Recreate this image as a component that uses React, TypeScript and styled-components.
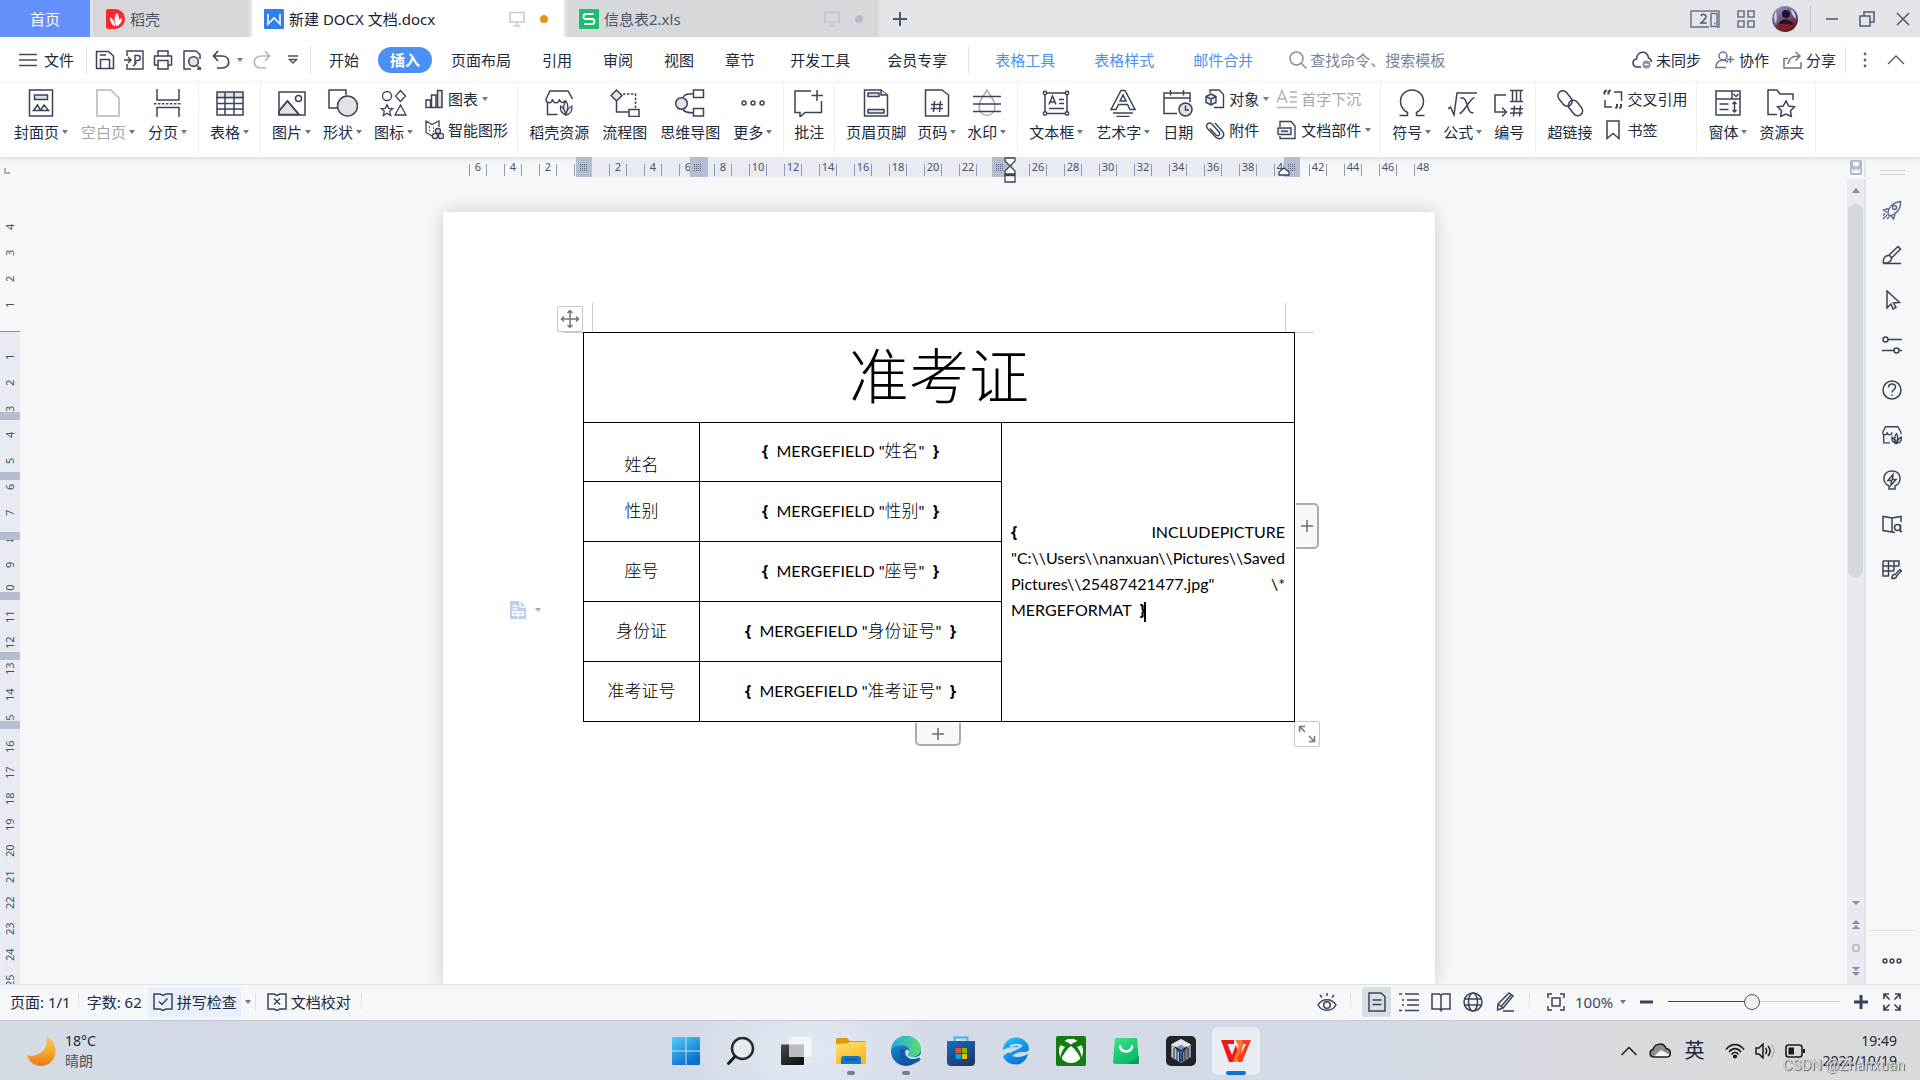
import React from 'react';
import styled, { createGlobalStyle, css } from 'styled-components';

const ink = '#3b4359';
const soft = '#6b7690';
const blue = '#4a90f5';
const shade = '#e1e3e6';
const canvas = '#f5f7f9';

const Global = createGlobalStyle`
  *, *::before, *::after { box-sizing: border-box; }
  html, body, #root { margin: 0; height: 100%; }
  body {
    overflow: hidden;
    font-family: "Noto Sans", "Noto Sans CJK SC", sans-serif;
    font-size: 15px;
    line-height: 20px;
    color: #20283c;
  }
  button, input, select { font: inherit; color: inherit; }
  button { padding: 0; border: 0; background: none; white-space: nowrap; }
  svg { display: block; flex: none; }
`;

/* ---------- icons ---------- */

type IconProps = { w?: number; h?: number; box?: string; color?: string; sw?: number; children: React.ReactNode };
const Icon = ({ w = 28, h = w, box, color = ink, sw = 1.5, children }: IconProps) => (
  <svg width={w} height={h} viewBox={box || `0 0 ${w} ${h}`} fill="none" stroke={color} strokeWidth={sw} aria-hidden="true">
    {children}
  </svg>
);

const Caret = ({ color = soft }: { color?: string }) => (
  <svg width="6" height="4" viewBox="0 0 6 4" aria-hidden="true"><path d="M0 0h6L3 4z" fill={color} /></svg>
);

const Leaves = () => (
  <g fill={shade} strokeWidth="1.2">
    <path d="M21 12c-3 3-3.400 8-.5 14 2.500-5 3.500-10 .5-14z" />
    <path d="M15.500 17c-.5 4 1 7.500 5 9-.3-4-1.500-7-5-9z" />
    <path d="M27 17c-3.500 1.500-5.500 5-6 9 4-.5 6.500-4 6-9z" />
  </g>
);

const big: Record<string, React.ReactNode> = {
  cover: <Icon><rect x="2.500" y="1" width="23" height="26" /><rect x="7.500" y="6" width="13" height="4.500" fill={shade} /><path d="M6.500 21.500l4-5.500 3 5.500zM13.500 21.500l3.500-5.500 4.500 5.500z" /></Icon>,
  blank: <Icon color="#b5b7bc"><path d="M3 1h14l8 8v18H3z" /></Icon>,
  pageBreak: <Icon><path d="M3 0v11h22V0M3 28v-9.500h22V28" /><path d="M0 14.800h28" strokeDasharray="2.500 1.500" /></Icon>,
  table: <Icon><path d="M1 8.500h26v17.500H1z" fill="none" /><path d="M1 3h26v5.500H1z" fill={shade} /><path d="M9 8.500V26M18 3v23M9 3v5M1 14.500h26M1 20h26" /></Icon>,
  image: <Icon><path d="M1 22L9.500 12 21 25.500H1z" fill={shade} /><rect x="1" y="3" width="26" height="23" /><path d="M1 22L9.500 12 21 25.500" /><circle cx="20.500" cy="9.500" r="3" /></Icon>,
  shapes: <Icon w={30} h={28}><path d="M10.500 19H1V1h17v5" /><circle cx="19.500" cy="17" r="10" fill={shade} /></Icon>,
  icons: <Icon sw={1.300}><circle cx="7" cy="7" r="4.500" /><path d="M20.500 1.500l5 5.500-5 5.500-5-5.500z" /><path d="M7 15.500l1.700 3.800 4 .3-3 2.700 1 4.200L7 24.200l-3.700 2.300 1-4.200-3-2.700 4-.3zM20.500 16l5.500 10H15z" /></Icon>,
  store: <Icon><path d="M2.500 13.500V25.500h10M1 10L5 2h18l4.500 8" /><path d="M1 10c0 5 6 5 6.500 0 .5 5 6.500 5 7 0 .5 4 4 4.500 6 1.500" /><Leaves /></Icon>,
  flow: <Icon w={30} h={28}><path d="M6.500 1L12 6.500 6.500 12 1 6.500z" fill={shade} /><path d="M6.500 12v11H19" /><rect x="19" y="20.500" width="10" height="7" /><path d="M13 5h12.500v15" strokeDasharray="2.500 1.500" /></Icon>,
  mind: <Icon w={30} h={28}><circle cx="6.500" cy="14.500" r="5.800" fill={shade} /><path d="M8 8.500C10 5 13 4.800 18.500 4.800M8 20.500c2 3 5 3.300 10.500 3.300" /><rect x="18.500" y="1" width="10" height="7.500" /><rect x="18.500" y="19.500" width="10" height="7.500" /></Icon>,
  more: <Icon><circle cx="5" cy="14" r="2" /><circle cx="14" cy="14" r="2" /><circle cx="23" cy="14" r="2" /></Icon>,
  comment: <Icon w={30} h={28}><path d="M17 2H1v21.500h5V28l5-4.500h16.500V12M23 1v11M17.500 6.500h11.500" /></Icon>,
  header: <Icon><path d="M2.500 1H19l6.500 5v21h-23z" /><path d="M19 1v5h6" fill={shade} /><rect x="6" y="4" width="11" height="3.500" fill={shade} /><rect x="6" y="20.500" width="16" height="3.500" fill={shade} /></Icon>,
  pageNo: <Icon><path d="M2.500 1H19l6.500 5v21h-23z" /><path d="M11.500 12l-1 11M17.500 12l-1 11M8 15.500h12M8 19.500h12" /></Icon>,
  watermark: <Icon><path d="M14 1c3 6 8 10 8 16.500 0 5-3.500 9-8 9s-8-4-8-9C6 11 11 7 14 1z" stroke="#a6a9b2" /><path d="M0 7.500h28M0 15h28M0 22.500h28" /></Icon>,
  textBox: <Icon><rect x="3" y="4" width="22" height="20.500" /><g fill="#fff"><circle cx="3" cy="4" r="1.700" /><circle cx="25" cy="4" r="1.700" /><circle cx="3" cy="24.500" r="1.700" /><circle cx="25" cy="24.500" r="1.700" /></g><path d="M7 15.500L10.500 7l3.500 8.500M8 13h5M17 10.500h5M17 14.500h5M7 19.500h15" /></Icon>,
  wordArt: <Icon><path d="M2 20.500L12 1.500h4l10 19h-5l-2.500-5h-9l-2.500 5zM11 12h6l-3-6z" fill="none" /><path d="M4 24h20M7.500 27.500h13" /></Icon>,
  date: <Icon w={30} h={28}><path d="M14 24.500H1V4h26v9M1 9h26M7.500 1v5.500M20.500 1v5.500" /><circle cx="22.500" cy="20.500" r="6.500" fill={shade} /><path d="M22.500 16.500v4.500h3.500" /></Icon>,
  omega: <Icon><path d="M1.500 26.500h8v-3C5 21 2.500 17 2.500 12.500 2.500 6 7.500 1 14 1s11.500 5 11.500 11.500c0 4.500-2.500 8.500-7 11v3h8" /></Icon>,
  formula: <Icon w={30} h={28}><path d="M0 20l2.500-2 3.500 8L9 4h20" /><path d="M12.500 9.500c3-2 5 .5 6.500 6 1.500 5.500 3 9.500 6.500 8M26.500 8.500C22 9 16 24 11.500 24.500" /></Icon>,
  numbering: <Icon w={30} h={28}><path d="M12 6H1v17h10M8 18.500l4.500 4.500L8 27.500M16 1.500h13M16 12.500h13M18.500 1.500v11M22.500 1.500v11M26.500 1.500v11M20.500 16.500l-1 11M26.500 16.500l-1 11M16.500 19.800h12.500M16 24h12.500" /></Icon>,
  link: <Icon><rect x="-5" y="-8.500" width="10" height="17" rx="5" transform="translate(9 9.500) rotate(-38)" /><rect x="-5" y="-8.500" width="10" height="17" rx="5" transform="translate(19.500 19) rotate(-38)" /></Icon>,
  form: <Icon><rect x="2" y="2" width="24" height="24" /><path d="M2 10h24M18 2v8" /><path d="M19.500 5l2.500 2.500L24.500 5M5.500 15h9M5.500 20.500h9M20.500 13.500v9M18.500 15l2-2 2 2M18.500 21l2 2 2-2" /></Icon>,
  library: <Icon w={30} h={28}><path d="M10 25.500H1V1h9l3 4h13v6" /><path d="M19 12l2.800 5 5.700.8-4 4 .9 5.700L19 25l-5.400 2.500.9-5.700-4-4 5.700-.8z" /></Icon>,
};

const small: Record<string, React.ReactNode> = {
  chart: <Icon w={20}><path d="M2 11h4.500v7.500H2z" /><path d="M7.500 6H12v12.500H7.500z" /><path d="M13.500 1.500H18v17h-4.500z" fill={shade} /></Icon>,
  smart: <Icon w={20} sw={1.300}><path d="M8 16l-6-3.500V1l6 3.500L15 1v6M5 7h1M9 8h1M5 10.500h1M9 11h1M12 9h1" /><circle cx="14" cy="11" r="2.500" fill={shade} /><circle cx="11" cy="16" r="2.700" fill={shade} /><circle cx="17" cy="16" r="2.700" fill={shade} /></Icon>,
  object: <Icon w={20} sw={1.400}><path d="M5 4V1h9l4.500 4.500v13H9" /><path d="M6 5l5 2.500v6L6 16l-5-2.500v-6zM1 7.500L6 10l5-2.500M6 10v6" fill={shade} /></Icon>,
  clip: <Icon w={20} sw={1.400}><path d="M5 8.500l6 6.500c2 2 5-.5 3-3L7.500 4.500C4 1 -.5 5 2.500 8.500l8 8.500c5 4.500 10.500-1 7-5.500L10 3" /></Icon>,
  dropCap: <Icon w={20} color="#b1b3b8"><path d="M0 14L5 1.500 10 14M1.500 10h7M13 3h7M13 8h7M13 13h7M0 18.500h20" /></Icon>,
  parts: <Icon w={20} sw={1.400}><path d="M3 7V1.500h11l4 4.500v12.500H3V16" /><rect x="1" y="8" width="13" height="6.500" fill={shade} /><path d="M4 11.200h7" /></Icon>,
  cross: <Icon w={20} sw={1.500}><path d="M11 3h7.500v9M9 18H2v-7" /><path d="M1.500 5.500V3L3.500 1M5.500 5.500V3l2-2M14 15v2.500l-1.500 2M18 15v2.500l-1.500 2" strokeWidth="2" /></Icon>,
  bookmark: <Icon w={20}><path d="M4 1h12v17.500l-6-5-6 5z" /></Icon>,
};

const quick: [string, React.ReactNode][] = [
  ['保存', <Icon w={20}><path d="M1.500 1.500h12l5 4.500v12.500h-17zM5.500 18V9.500h9V18M5 5h6" /></Icon>],
  ['输出为PDF', <Icon w={20} sw={1.400}><path d="M3 6V1h16v18H3v-5M0 10h6.500M4 7l3 3-3 3M11 15V5.500h3c3 0 3 5 0 5h-3M9 16c2-1 3-2.500 3-4" /></Icon>],
  ['打印', <Icon w={20}><path d="M5 6V1h10v5M5 15H1.500V6h17v9H15M5 10.500h10V19H5z" /></Icon>],
  ['打印预览', <Icon w={20}><path d="M9 19H2V1h12l4 3.500V9M18 17v2h-3" /><circle cx="11.500" cy="11.500" r="4.800" fill={shade} /><path d="M15 15.500l4 4" /></Icon>],
];

const rail: [string, React.ReactNode][] = [
  ['启动', <Icon w={20} color="#5b6a8d"><path d="M6 14c0-5 3-11 12.500-12.500C19 10 13 15 7.500 16zM6.500 8.500L1.500 10l3.500 2.500M13 14.500l-1.500 4.500-2.500-3M5 15l-4 4M3 13.500l-2 2M7 17l-2 2" /><circle cx="12.500" cy="7.500" r="2" /></Icon>],
  ['样式', <Icon w={20}><path d="M7 10l9-8.500 2.500 2.500-9 9M1.500 18c-1-4.500 2-8 5.500-7.500 3 .5 3 4 1 6-1.500 1.500-3.500 1.700-6.500 1.500zM1 18.500h18" /></Icon>],
  ['选择', <Icon w={20}><path d="M5 1v17l4-4 2 5 3-1.500-2.500-4.500 6-.5z" /></Icon>],
  ['属性', <Icon w={20}><circle cx="3.500" cy="4.500" r="2.500" /><path d="M6 4.500h14M0 15.500h12" /><circle cx="14.500" cy="15.500" r="2.500" /><path d="M17 15.500h3" /></Icon>],
  ['帮助', <Icon w={20}><circle cx="10" cy="10" r="9" /><path d="M6.500 7.500c0-5 7-4.500 7-.5 0 2.500-3.500 3-3.500 5.500M10 14.500v1.500" /></Icon>],
  ['稻壳资源', <Icon w={20} box="0 0 29 28" sw={2}><path d="M2.500 13.500V25.500h9M1 10L5 2h18l4.500 8" /><path d="M1 10c0 5 6 5 6.500 0 .5 5 6.500 5 7 0M27.500 10v3" /><g fill={shade}><path d="M21 12c-3 3-3.400 8-.5 14 2.500-5 3.500-10 .5-14zM14.500 17c-.5 4 1 7.500 5 9-.3-4-1.500-7-5-9zM28 17c-3.500 1.500-5.500 5-6 9 4-.5 6.500-4 6-9z" /></g></Icon>],
  ['推荐', <Icon w={20}><path d="M7 19v-3c-8-4-6-15 3-15s11 11 3 15v3zM11 4.500l-5 6h3.500L9 15l5-5.500h-3.500z" /></Icon>],
  ['查找', <Icon w={20}><path d="M10 3v14L1 15.500V1.500zM10 3l9-1.500V7M10 17l3 .5" /><circle cx="15.500" cy="12.500" r="3" /><path d="M18.500 9.500v7h1.500" /></Icon>],
  ['表格', <Icon w={20}><path d="M1 1h16v5M1 1v15h6M1 6h16M1 11h11M6.500 1v15M12 1v10M10 18.500c0-3 1-4.500 3-4l5-5 1.500 1.500-5 5c.5 2-2 2.500-4.500 2.500z" /></Icon>],
];

/* ---------- title bar ---------- */

const Shell = styled.div`
  display: flex;
  flex-direction: column;
  height: 100vh;
  background: ${canvas};
`;
const TitleBar = styled.header`
  display: flex;
  height: 37px;
  flex: none;
  background: #e2e4e8;
`;
const HomeTab = styled.button`
  width: 90px;
  color: #fff;
  background: #6490fb;
`;
const DocTab = styled.button<{ $w: number; $active?: boolean }>`
  display: flex;
  align-items: center;
  gap: 5px;
  width: ${p => p.$w}px;
  margin-left: 3px;
  padding: 0 16px 0 12px;
  color: ${p => (p.$active ? '#1b2030' : '#4d5468')};
  background: ${p => (p.$active ? '#fff' : '#d6d8dc')};
`;
const TabMeta = styled.span`
  display: flex;
  align-items: center;
  gap: 15px;
  margin-left: auto;
`;
const Dot = styled.i<{ $c: string }>`
  width: 8px;
  height: 8px;
  border-radius: 50%;
  background: ${p => p.$c};
`;
const AddTab = styled.button`
  display: grid;
  place-items: center;
  width: 42px;
`;
const WindowTools = styled.div`
  display: flex;
  align-items: center;
  gap: 16px;
  margin-left: auto;
  padding-right: 7px;
`;
const TitleRule = styled.i`
  width: 1px;
  height: 26px;
  margin: 0 -4px;
  background: #c5c8cf;
`;
const IconBtn = styled.button<{ $w?: number }>`
  display: grid;
  place-items: center;
  width: ${p => p.$w ?? 20}px;
`;
const Screen = ({ c }: { c: string }) => (
  <Icon w={16} h={16} color={c}><path d="M1 1.500h14v9.500H1zM8 11v4M4.500 15h7" /></Icon>
);

/* ---------- menu row ---------- */

const MenuRow = styled.nav`
  display: flex;
  align-items: center;
  height: 46px;
  flex: none;
  padding: 0 14px 0 19px;
  background: #fff;
`;
const FileBtn = styled.button`
  display: flex;
  align-items: center;
  gap: 7px;
`;
const Rule = styled.i<{ $l?: number; $r?: number; $h?: number }>`
  flex: none;
  width: 1px;
  height: ${p => p.$h ?? 28}px;
  margin: 0 ${p => p.$r ?? 0}px 0 ${p => p.$l ?? 0}px;
  background: #e0e2e6;
`;
const QuickBar = styled.div`
  display: flex;
  align-items: center;
  gap: 9px;
`;
const Split = styled.div`
  display: flex;
  align-items: center;
  gap: 6px;
`;
const Tabs = styled.div`
  display: flex;
  align-items: center;
  gap: 7px;
`;
const Tab = styled.button<{ $pad?: number; $on?: boolean; $ctx?: boolean }>`
  height: 26px;
  padding: 0 ${p => p.$pad ?? 12}px;
  border-radius: 13px;
  ${p => p.$ctx && css`color: ${blue};`}
  ${p => p.$on && css`color: #fff; background: ${blue}; font-weight: 600;`}
`;
const Search = styled.label`
  display: flex;
  align-items: center;
  gap: 3px;
  margin-left: 20px;
`;
const SearchInput = styled.input`
  width: 180px;
  padding: 0;
  border: 0;
  outline: 0;
  background: none;
  &::placeholder { color: #78829b; opacity: 1; }
`;
const Account = styled.div`
  display: flex;
  align-items: center;
  gap: 14px;
  margin-left: auto;
`;
const AccountBtn = styled.button`
  display: flex;
  align-items: center;
  gap: 4px;
`;

/* ---------- ribbon ---------- */

const Ribbon = styled.section`
  display: flex;
  height: 74px;
  flex: none;
  padding: 0 3px;
  background: #fff;
  box-shadow: 0 1px 5px rgba(40, 50, 70, 0.18);
`;
const Group = styled.div<{ $gap?: number; $pad?: number }>`
  display: flex;
  height: 72px;
  gap: ${p => p.$gap ?? 12}px;
  padding: 6px ${p => p.$pad ?? 11}px 0;
  border-right: 1px solid #eceef1;
`;
const Tool = styled.button<{ $off?: boolean }>`
  display: flex;
  flex-direction: column;
  align-items: center;
  gap: 5px;
  height: 54px;
  color: ${p => (p.$off ? '#a4a6ab' : 'inherit')};
`;
const ToolLabel = styled.span`
  display: flex;
  align-items: center;
  gap: 3px;
`;
const Columns = styled.div`
  display: flex;
  gap: 8px;
  margin: 0 -2px 0 -1px;
`;
const Column = styled.div`
  display: flex;
  flex-direction: column;
  gap: 11px;
`;
const SmallTool = styled.button<{ $off?: boolean }>`
  display: flex;
  align-items: center;
  gap: 4px;
  color: ${p => (p.$off ? '#a4a6ab' : 'inherit')};
`;

type Item = [label: string, icon: string, drop?: boolean, off?: boolean];
const BigTool = ({ it: [label, icon, drop, off] }: { it: Item }) => (
  <Tool $off={off}>
    {big[icon]}
    <ToolLabel>{label}{drop && <Caret />}</ToolLabel>
  </Tool>
);
const ToolColumn = ({ items }: { items: Item[] }) => (
  <Column>
    {items.map(([label, icon, drop, off]) => (
      <SmallTool key={label} $off={off}>{small[icon]}{label}{drop && <Caret />}</SmallTool>
    ))}
  </Column>
);
type GroupDef = { gap?: number; pad?: number; items: Item[]; cols?: Item[][] };
const groups: GroupDef[] = [
  { gap: 13, items: [['封面页', 'cover', true], ['空白页', 'blank', true, true], ['分页', 'pageBreak', true]] },
  { items: [['表格', 'table', true]] },
  { items: [['图片', 'image', true], ['形状', 'shapes', true], ['图标', 'icons', true]], cols: [[['图表', 'chart', true], ['智能图形', 'smart']]] },
  { gap: 13, items: [['稻壳资源', 'store'], ['流程图', 'flow'], ['思维导图', 'mind'], ['更多', 'more', true]] },
  { pad: 10, items: [['批注', 'comment']] },
  { gap: 11, items: [['页眉页脚', 'header'], ['页码', 'pageNo', true], ['水印', 'watermark', true]] },
  { gap: 13, items: [['文本框', 'textBox', true], ['艺术字', 'wordArt', true], ['日期', 'date']], cols: [[['对象', 'object', true], ['附件', 'clip']], [['首字下沉', 'dropCap', false, true], ['文档部件', 'parts', true]]] },
  { items: [['符号', 'omega', true], ['公式', 'formula', true], ['编号', 'numbering']] },
  { items: [['超链接', 'link']], cols: [[['交叉引用', 'cross'], ['书签', 'bookmark']]] },
  { items: [['窗体', 'form', true], ['资源夹', 'library']] },
];

/* ---------- workspace ---------- */

const Work = styled.main`
  display: grid;
  grid-template-columns: 20px minmax(0, 1fr) 19px 54px;
  grid-template-rows: 20px minmax(0, 1fr);
  flex: 1;
  min-height: 0;
`;
const Corner = styled.div`
  padding: 11px 0 0 4px;
`;
const CornerMark = styled.i`
  display: block;
  width: 6px;
  height: 6px;
  border: solid #a8afc2;
  border-width: 0 0 2px 2px;
`;
const Centered = styled.div<{ $clip?: boolean }>`
  display: flex;
  justify-content: center;
  padding-left: 11px;
  overflow: ${p => (p.$clip ? 'hidden' : 'visible')};
`;
const Ruler = styled.div`
  position: relative;
  z-index: 1;
  flex: none;
  width: 992px;
  padding: 0 0 0 26px;
  background: linear-gradient(90deg, transparent 140px, #e8ebf1 140px 850px, transparent 850px);
`;
const RulerCells = styled.div`
  display: flex;
  gap: 17px;
`;
const RulerCell = styled.span<{ $last?: boolean }>`
  display: block;
  flex: none;
  width: 18px;
  height: 20px;
  text-align: center;
  font-size: 11px;
  line-height: 19px;
  color: #49526b;
  background:
    linear-gradient(#8f99b2, #8f99b2) 0 7px / 1px 12px no-repeat,
    linear-gradient(#8f99b2, #8f99b2) 100% 7px / ${p => (p.$last ? 0 : 1)}px 12px no-repeat;
`;
const RulerBand = styled.i<{ $x: number; $w: number }>`
  position: absolute;
  top: 0;
  left: ${p => p.$x}px;
  width: ${p => p.$w}px;
  height: 20px;
  background: #b5bdd1;
  &::after {
    content: "";
    position: absolute;
    left: 4px;
    top: 6px;
    width: 8px;
    height: 8px;
    background:
      repeating-linear-gradient(#b5bdd1 0 1px, transparent 1px 2px),
      repeating-linear-gradient(90deg, #59627d 0 1px, transparent 1px 2px);
  }
`;
const Indent = styled.span<{ $x: number; $y: number }>`
  position: absolute;
  left: ${p => p.$x}px;
  top: ${p => p.$y}px;
`;
const VRuler = styled.div`
  position: relative;
  display: flex;
  flex-direction: column;
  overflow: hidden;
  padding-top: 37px;
  background: linear-gradient(transparent 154px, #8a93ac 154px 155px, #e8ebf1 155px);
`;
const VCell = styled.span`
  flex: none;
  height: 26px;
  width: 20px;
  text-align: center;
  writing-mode: vertical-rl;
  transform: rotate(180deg);
  font-size: 11px;
  line-height: 20px;
  color: #49526b;
`;
const VBand = styled.i<{ $y: number }>`
  position: absolute;
  left: 0;
  top: ${p => p.$y}px;
  width: 20px;
  height: 8px;
  background: #b5bdd1;
`;
const Page = styled.article`
  position: relative;
  flex: none;
  width: 992px;
  margin-top: 35px;
  padding: 120px 140px 0;
  background: #fff;
  box-shadow: 0 0 16px rgba(60, 65, 75, 0.22);
`;
const TableWrap = styled.div`
  position: relative;
  width: 712px;
`;
const Sheet = styled.table`
  width: 100%;
  border-collapse: collapse;
  table-layout: fixed;
  font-family: Lato, "Noto Sans CJK SC", sans-serif;
  font-size: 16px;
  color: #000;
  th, td { padding: 0 0 2px; border: 1px solid #000; text-align: center; font-weight: 400; }
`;
const Song = styled.span`
  font-size: 17px;
  font-weight: 300;
`;
const Brace = styled.b`
  font-family: "Noto Sans", sans-serif;
  font-weight: 700;
`;
const Title = styled.th`
  && { padding-bottom: 4px; font-size: 60px; font-weight: 300; line-height: 72px; }
`;
const Row = styled.tr<{ $h: number }>`
  height: ${p => p.$h}px;
`;
const FieldCell = styled.td`
  white-space: pre;
`;
const LabelCell = styled.th<{ $low?: boolean }>`
  && { vertical-align: ${p => (p.$low ? 'bottom' : 'middle')}; padding-bottom: ${p => (p.$low ? 6 : 2)}px; }
`;
const PictureCell = styled.td`
  && { padding: 0 9px 2px; }
`;
const CodeLine = styled.div<{ $end?: boolean }>`
  line-height: 26px;
  white-space: pre-wrap;
  text-align: justify;
  text-align-last: ${p => (p.$end ? 'left' : 'justify')};
`;
const TextCursor = styled.i`
  display: inline-block;
  width: 2px;
  height: 20px;
  margin-left: -2px;
  vertical-align: middle;
  background: #000;
`;
const Handle = styled.button<{ $x: string; $y: string; $w: number; $h: number; $side?: 'right' | 'bottom' }>`
  position: absolute;
  left: ${p => p.$x};
  top: ${p => p.$y};
  display: grid;
  place-items: center;
  width: ${p => p.$w}px;
  height: ${p => p.$h}px;
  border: 1px solid #c4c6ca;
  border-radius: 2px;
  background: #fff;
  ${p => p.$side && css`border: 2px solid #a9abaf; background: #f8f8f8;`}
  ${p => p.$side === 'right' && css`border-left: 0; border-radius: 0 5px 5px 0;`}
  ${p => p.$side === 'bottom' && css`border-top: 0; border-radius: 0 0 5px 5px;`}
`;
const Mark = styled.i<{ $x: number; $y: number; $w: number; $h: number }>`
  position: absolute;
  left: ${p => p.$x}px;
  top: ${p => p.$y}px;
  width: ${p => p.$w}px;
  height: ${p => p.$h}px;
  background: #c9cbcf;
`;
const PasteTag = styled.button`
  position: absolute;
  left: -73px;
  top: 269px;
  display: flex;
  align-items: center;
  gap: 9px;
`;
const ScrollTop = styled.div`
  display: grid;
  place-items: center;
  border-right: 2px solid #e2e4ec;
`;
const Scroll = styled.div`
  display: flex;
  flex-direction: column;
  align-items: center;
  gap: 15px;
  margin-top: 2px;
  padding: 9px 0 8px;
  background: #e8eaf0;
  border-right: 2px solid #e2e4ec;
`;
const Track = styled.div`
  flex: 1;
  margin-top: -4px;
`;
const Thumb = styled.div`
  width: 15px;
  height: 70%;
  max-height: 374px;
  border-radius: 8px;
  background: #d3d7e0;
`;
const Rail = styled.aside`
  grid-row: 1 / 3;
  grid-column: 4;
  display: flex;
  flex-direction: column;
  align-items: center;
  gap: 25px;
  padding: 13px 2px 12px 0;
`;
const Grip = styled.i`
  width: 25px;
  height: 5px;
  border: solid #d0d3d9;
  border-width: 1px 0;
`;
const RailEnd = styled.div`
  display: grid;
  place-items: center;
  width: 49px;
  height: 42px;
  margin-top: auto;
  padding-top: 18px;
  border-top: 1px solid #dfe2e8;
`;

/* ---------- status bar ---------- */

const Status = styled.footer`
  display: flex;
  align-items: center;
  height: 36px;
  flex: none;
  padding-bottom: 2px;
  border-top: 1px solid #dfe2e8;
  background: ${canvas};
`;
const Info = styled.span`
  padding: 0 7px 0 10px;
`;
const Count = styled(Info)`
  padding: 0 6px 0 8px;
`;
const Chip = styled.button<{ $on?: boolean }>`
  display: flex;
  align-items: center;
  gap: 4px;
  height: 30px;
  padding: 0 4px 0 5px;
  background: ${p => (p.$on ? '#e7f0fc' : 'none')};
`;
const ViewBar = styled.div`
  display: flex;
  align-items: center;
  margin-left: auto;
  padding-right: 18px;
`;
const View = styled.button<{ $on?: boolean }>`
  display: grid;
  place-items: center;
  width: 29px;
  height: 30px;
  margin-right: 3px;
  border-radius: 2px;
  background: ${p => (p.$on ? '#d8dde6' : 'none')};
`;
const Zoom = styled.select`
  width: 45px;
  padding: 0;
  border: 0;
  appearance: none;
  background: none;
  color: #3d4861;
`;
const Slider = styled.input`
  width: 172px;
  height: 18px;
  margin: 0 14px 0 15px;
  appearance: none;
  background: linear-gradient(90deg, #3b4560 50%, #d0d3da 50%) center / 100% 1px no-repeat;
  &::-webkit-slider-thumb {
    appearance: none;
    width: 16px;
    height: 16px;
    border: 1px solid #555;
    border-radius: 50%;
    background: #efefef;
  }
`;

/* ---------- taskbar ---------- */

const Taskbar = styled.footer`
  display: grid;
  grid-template-columns: 1fr auto 1fr;
  align-items: center;
  height: 60px;
  flex: none;
  padding-left: 1px;
  background:
    radial-gradient(ellipse 130px 90px at 810px 50%, #e2e9f3, transparent),
    linear-gradient(90deg, #d3dbe5, #d3dae6 70%, #d8dadf 82%, #d9dadd);
  border-top: 1px solid #c3c9d8;
`;
const Weather = styled.div`
  display: flex;
  align-items: center;
  gap: 9px;
  padding-left: 25px;
  font-size: 14px;
`;
const WeatherSky = styled.div`
  color: #4f535b;
`;
const Apps = styled.div`
  display: flex;
  gap: 7px;
`;
const AppBtn = styled.button<{ $on?: boolean; $open?: boolean }>`
  position: relative;
  display: grid;
  place-items: center;
  width: 48px;
  height: 48px;
  border-radius: 5px;
  ${p => p.$on && css`background: #e9ecf3; box-shadow: 0 0 1px 1px #d2d6df;`}
  ${p => (p.$on || p.$open) && css`
    &::after {
      content: "";
      position: absolute;
      bottom: 0;
      width: ${p.$on ? 20 : 8}px;
      height: 4px;
      border-radius: 2px;
      background: ${p.$on ? '#0b76d6' : '#797c84'};
    }
  `}
`;
const Tray = styled.div`
  display: flex;
  align-items: center;
  justify-content: flex-end;
  padding-right: 23px;
`;
const Lang = styled.span`
  margin: 0 20px 0 14px;
  font-size: 20px;
  line-height: 24px;
`;
const Clock = styled.div`
  margin-left: 18px;
  text-align: right;
  font-size: 14px;
`;
const Watermark = styled.div`
  position: fixed;
  right: 15px;
  bottom: 5px;
  font-family: Roboto, sans-serif;
  font-size: 15px;
  color: rgba(255, 255, 255, 0.75);
  text-shadow: 1px 1px 1px #666, 0 0 1px #777;
`;

const Grad = ({ id, a, b }: { id: string; a: string; b: string }) => (
  <linearGradient id={id} x1="0" y1="0" x2=".6" y2="1"><stop stopColor={a} /><stop offset="1" stopColor={b} /></linearGradient>
);
const Logo = ({ children }: { children: React.ReactNode }) => (
  <svg width="30" height="30" viewBox="0 0 30 30" aria-hidden="true">{children}</svg>
);

const apps: { name: string; open?: boolean; on?: boolean; art: React.ReactNode }[] = [
  { name: '开始', art: <Logo><Grad id="win" a="#52cdfb" b="#0670cd" /><path fill="url(#win)" d="M2 1h12.500v13.500H1V2a1 1 0 0 1 1-1zM15.500 1H28a1 1 0 0 1 1 1v12.500H15.500zM1 15.500h13.500V29H2a1 1 0 0 1-1-1zM15.500 15.500H29V28a1 1 0 0 1-1 1H15.500z" /></Logo> },
  { name: '搜索', art: <Logo><circle cx="16.500" cy="12.500" r="10.500" fill="#e6ebf2" stroke="#2b2b2b" strokeWidth="2.500" /><path d="M9 20.500L2.500 27.500" stroke="#1d1d1d" strokeWidth="3" strokeLinecap="round" /></Logo> },
  { name: '任务视图', art: <Logo><Grad id="tv" a="#4a4a4a" b="#161616" /><rect x="0" y="8.500" width="23" height="20.500" rx="1" fill="url(#tv)" /><rect x="8" y="1" width="22" height="20" rx="1" fill="#f4f5f6" /><path d="M8 8.500h15V21H8z" fill="#bcbdbf" /></Logo> },
  { name: '文件资源管理器', open: true, art: <Logo><Grad id="fd" a="#ffe07a" b="#fcb614" /><path d="M0 4a2 2 0 0 1 2-2h9l3 3h14a2 2 0 0 1 2 2v6H0z" fill="#dc9a0c" /><path d="M0 8l11-.5L14 6h16v21a1 1 0 0 1-1 1H1a1 1 0 0 1-1-1z" fill="url(#fd)" /><path d="M5 28v-5a3 3 0 0 1 3-3h14a3 3 0 0 1 3 3v5z" fill="#1577cc" /><path d="M9 23.500h12" stroke="#0b4f94" strokeWidth="1.500" /></Logo> },
  { name: 'Edge', open: true, art: <Logo><Grad id="e1" a="#1c9be0" b="#0a4c9c" /><linearGradient id="e2"><stop stopColor="#24a9e8" /><stop offset="1" stopColor="#5fdc6b" /></linearGradient><circle cx="15" cy="15" r="15" fill="url(#e1)" /><path d="M1 10C4 3 9 0 15 0c9 0 15 6.500 15 13 0 5-4 8-9 8-3 0-5-1-4-3 3-4 0-8-5-8.500C7 9 3 10 1 13z" fill="url(#e2)" /><path d="M12 13c-3 6 0 13 8 13 4 0 7-1.500 8.500-3.500" fill="none" stroke="#1557a4" strokeWidth="3" /><path d="M15 14c-2 4 1 9 7 9 3 0 5-.7 7-2l1 1v-4c-2 2.500-5 3.500-9 3-4-.3-5-2-3.500-4 1-1.500.5-3-1.500-3z" fill="#dce6f2" /></Logo> },
  { name: 'Microsoft Store', art: <Logo><Grad id="ms" a="#136fc0" b="#203a68" /><path d="M8.500 6V1.500h13V6" fill="none" stroke="#35b7f2" strokeWidth="2" /><path d="M1 5h28v21a4 4 0 0 1-4 4H5a4 4 0 0 1-4-4z" fill="url(#ms)" /><path d="M9.500 12H15v5H9.500z" fill="#f25022" /><path d="M16 12h5v5h-5z" fill="#7fba00" /><path d="M9.500 18H15v5H9.500z" fill="#00a4ef" /><path d="M16 18h5v5h-5z" fill="#ffb900" /></Logo> },
  { name: '浏览器', art: <Logo><Grad id="br" a="#27c3ff" b="#0873d8" /><path d="M2 14C2 7 8 1.500 15 1.500S28 7 28 13c0 2-2 3-4 3-6 0-10 1-13 4 5 2 11 1 16-2-1.500 6-6 10.500-12 10.500C9 28.500 3.500 25 2 20c5-4 11-6 16-8.500-6-1.500-11 0-16 2.500z" fill="url(#br)" /><path d="M9 10.500c4-2 8-2 11-.5-3 2.500-8 4-12 6.500" fill="none" stroke="#d4dbe6" strokeWidth="2" /></Logo> },
  { name: 'Xbox', art: <Logo><rect width="30" height="30" rx="2" fill="#117c10" /><circle cx="15" cy="15" r="12" fill="#fff" /><path d="M7 5c3 0 6 2 8 3.500C17 7 20 5 23 5l3 4-5 2c4 5 5 9 4 13-2-6-6-11-10-14C11 13 7 18 5 24c-1-4 0-8 4-13L4 9z" fill="#117c10" /><path d="M10 4c2-1.500 8-1.500 10 0l-5 2.500z" fill="#fff" /></Logo> },
  { name: '应用商店', art: <Logo><Grad id="gs" a="#3be58b" b="#08b866" /><path d="M4 2h22l2 24a2 2 0 0 1-2 2H4a2 2 0 0 1-2-2z" fill="url(#gs)" /><path d="M16 28c5-2 9-4 11.500-8l.5 8z" fill="#079a5b" /><path d="M9 10.500c1 6.500 11 6.500 12 0" fill="none" stroke="#fff" strokeWidth="2.500" strokeLinecap="round" /></Logo> },
  { name: '3D', art: <Logo><rect width="30" height="30" rx="5" fill="#22242a" /><path d="M15 3l10 5.500v12.500L15 27 5 21V8.500z" fill="#8a919e" /><path d="M15 3l10 5.500-5 3-5-3-5 3-5-3z" fill="#dfe3ea" /><path d="M6 10l7 5v10l-7-4z" fill="#c3cad6" /><path d="M8 12v10M11 14v10M19 14v10M22 12v10" stroke="#373c47" strokeWidth="1.200" /><path d="M9 11l6 3.500L21 11l-4.500 5.500V25h-3v-8.500z" fill="#2369d8" stroke="#121418" /></Logo> },
  { name: 'WPS', on: true, art: <Logo><path d="M0 4h13v4H6.500L11 19l4-10 2 6-5 11H8z" fill="#f5161c" /><path d="M13 26l8-22h9l-9 22h-4l-1.500-4z" fill="#fb3a1a" /><path d="M19.500 19L25 8h-3z" fill="#e9ecf3" /><path d="M12 26l5.500-16L14.500 4H21l1 3-6.500 19z" fill="#ff7426" /></Logo> },
];

const rulerLabels = ['6', '4', '2', '', ...Array.from({ length: 24 }, (_, i) => String((i + 1) * 2))];
const vLabels = ['4', '3', '2', '1', '', ...Array.from({ length: 25 }, (_, i) => String(i + 1))];
const fields: [string, string][] = [['姓名', '姓名'], ['性别', '性别'], ['座号', '座号'], ['身份证', '身份证号'], ['准考证号', '准考证号']];

const PlusSign = () => <Icon w={12} color="#6c6e73" sw={1.500}><path d="M6 0v12M0 6h12" /></Icon>;

export default function App() {
  return (
    <Shell>
      <Global />
      <TitleBar>
        <HomeTab>首页</HomeTab>
        <DocTab $w={156}>
          <svg width="20" height="20" viewBox="0 0 20 20" aria-hidden="true"><path d="M3 0h7a10 10 0 0 1 0 20H3a2 2 0 0 1-2-2V2a2 2 0 0 1 2-2z" fill="#f9292f" /><path d="M12 4c-3 3-3 8-1 13 4-4 4-9 1-13zM5 8c0 5 2 8 5 9.500C10 13 8 10 5 8zM17 9c-3 1-5 4-5.500 8.500C15 16 17 13 17 9z" fill="#fff" /></svg>
          稻壳
        </DocTab>
        <DocTab $w={312} $active>
          <svg width="20" height="20" viewBox="0 0 20 20" aria-hidden="true"><rect width="20" height="20" rx="1" fill="#2f7ff0" /><path d="M4 5v10l6-6 6 6V5" fill="none" stroke="#fff" strokeWidth="1.600" /></svg>
          新建 DOCX 文档.docx
          <TabMeta><Screen c="#c3cad9" /><Dot $c="#e8960c" /></TabMeta>
        </DocTab>
        <DocTab $w={312}>
          <svg width="20" height="20" viewBox="0 0 20 20" aria-hidden="true"><rect width="20" height="20" rx="1" fill="#1cbc71" /><path d="M14.500 5H7a2.400 2.400 0 0 0 0 5h6a2.400 2.400 0 0 1 0 5H5" fill="none" stroke="#fff" strokeWidth="1.800" /></svg>
          信息表2.xls
          <TabMeta><Screen c="#b9c1d4" /><Dot $c="#b3bbd0" /></TabMeta>
        </DocTab>
        <AddTab aria-label="新建标签"><Icon w={16} color="#4b566f" sw={2}><path d="M8 1v14M1 8h14" /></Icon></AddTab>
        <WindowTools>
          <IconBtn $w={30} aria-label="双屏"><Icon w={30} h={18} color="#6a7489"><path d="M19 17H1V1h28v16h-2M21 3.500h6v13h-6zM24 13.500h1.500" /><path d="M11 6c1-2.500 5-2 5 .7 0 2.300-3 4-5 6.300h5.500" stroke="#4b566f" /></Icon></IconBtn>
          <IconBtn aria-label="应用"><Icon w={18} color="#6a7489" sw={1.600}><path d="M1 1h6v6H1zM11 1h6v6h-6zM1 11h6v6H1zM11 11h6v6h-6z" /></Icon></IconBtn>
          <IconBtn $w={26} aria-label="用户">
            <svg width="26" height="26" viewBox="0 0 26 26" aria-hidden="true"><Grad id="av" a="#8fa6dd" b="#5e1420" /><circle cx="13" cy="13" r="13" fill="url(#av)" /><path d="M4 5c1 5 1 8 0 13a13 13 0 0 1 0-13zM19 3c3 2 5 6 5 10-3-2-5-6-5-10z" fill="#c3d4fb" /><circle cx="14" cy="8" r="4" fill="#1c1433" /><path d="M7 18c1-6 12-6 14 0l-3 5H9z" fill="#1f1230" /><path d="M4 20c4-3 12-3 18 0-4 6-13 7-18 0z" fill="#7a2026" /></svg>
          </IconBtn>
          <TitleRule />
          <IconBtn $w={18} aria-label="最小化"><Icon w={14} color="#4f5a73"><path d="M1 7h12" /></Icon></IconBtn>
          <IconBtn aria-label="还原"><Icon w={16} color="#4f5a73"><path d="M1 5h10v10H1zM5 5V1h10v10h-4" /></Icon></IconBtn>
          <IconBtn aria-label="关闭"><Icon w={14} color="#4f5a73"><path d="M1 1l12 12M13 1L1 13" /></Icon></IconBtn>
        </WindowTools>
      </TitleBar>

      <MenuRow>
        <FileBtn><Icon w={18} h={14} color="#4a4f5c"><path d="M0 1.500h18M0 7h18M0 12.500h18" /></Icon>文件</FileBtn>
        <Rule $l={12} $r={8} />
        <QuickBar>
          {quick.map(([n, art]) => <IconBtn key={n} aria-label={n}>{art}</IconBtn>)}
          <Split>
            <IconBtn aria-label="撤销"><Icon w={18} h={20} sw={1.700}><path d="M6 1L1.500 6 6 11M2 6h8c9 0 9 12 0 12H5" /></Icon></IconBtn>
            <Caret />
          </Split>
          <IconBtn aria-label="恢复"><Icon w={18} h={20} color="#b5b7bc" sw={1.700}><path d="M12 1l4.500 5-4.500 5M16 6H8c-9 0-9 12 0 12h5" /></Icon></IconBtn>
          <IconBtn $w={24} aria-label="自定义快速访问"><Icon w={10} h={10} color="#4a4f5c" sw={1.300}><path d="M0 1h10M1.500 4.500L5 8l3.500-3.500z" /></Icon></IconBtn>
        </QuickBar>
        <Rule $l={5} $r={6} />
        <Tabs>
          <Tab>开始</Tab><Tab $on>插入</Tab><Tab>页面布局</Tab><Tab>引用</Tab><Tab>审阅</Tab><Tab>视图</Tab><Tab>章节</Tab>
          <Tab $pad={16}>开发工具</Tab><Tab $pad={14}>会员专享</Tab>
          <Rule $h={26} $r={3} />
          <Tab $pad={16} $ctx>表格工具</Tab><Tab $pad={16} $ctx>表格样式</Tab><Tab $pad={16} $ctx>邮件合并</Tab>
        </Tabs>
        <Search>
          <Icon w={18} color="#8790a8"><circle cx="7.500" cy="7.500" r="6.500" /><path d="M12 12l5.500 5.500" /></Icon>
          <SearchInput aria-label="搜索" placeholder="查找命令、搜索模板" />
        </Search>
        <Account>
          <AccountBtn><Icon w={20} h={18}><path d="M9 16H5C-.5 15.500 0 8.500 4.500 8 5 -.5 16 -1 16.500 7c2 .7 3 2 2.800 4" /><circle cx="14.500" cy="13.500" r="4" fill="#8791ad" stroke="none" /><path d="M12.500 13.500h4" stroke="#fff" /></Icon>未同步</AccountBtn>
          <AccountBtn><Icon w={20} h={18} color={soft}><circle cx="8" cy="5" r="4" /><path d="M11 16.500H1c0-8 9-9 12-5M15.500 5v7M12 8.500h7" /></Icon>协作</AccountBtn>
          <AccountBtn><Icon w={19} h={18} color={soft}><path d="M5 7.500H1V17h17v-6M5 13C6 7 9 5 17 5M12.500 1L17 5l-4.500 4.500" /></Icon>分享</AccountBtn>
        </Account>
        <Rule $l={9} $r={9} $h={26} />
        <IconBtn aria-label="更多"><svg width="4" height="16" viewBox="0 0 4 16" fill="#5a6479" aria-hidden="true"><circle cx="2" cy="2" r="1.400" /><circle cx="2" cy="8" r="1.400" /><circle cx="2" cy="14" r="1.400" /></svg></IconBtn>
        <Rule $l={10} $h={0} />
        <IconBtn aria-label="收起功能区"><Icon w={18} h={10} color="#5a6479"><path d="M1 9l8-8 8 8" /></Icon></IconBtn>
      </MenuRow>

      <Ribbon>
        {groups.map((g, i) => (
          <Group key={i} $gap={g.gap} $pad={g.pad}>
            {g.items.map(it => <BigTool key={it[0]} it={it} />)}
            {g.cols && <Columns>{g.cols.map((c, j) => <ToolColumn key={j} items={c} />)}</Columns>}
          </Group>
        ))}
      </Ribbon>

      <Work>
        <Corner><CornerMark /></Corner>
        <Centered>
          <Ruler>
            <RulerCells>{rulerLabels.map((l, i) => <RulerCell key={i} $last={i === rulerLabels.length - 1}>{l}</RulerCell>)}</RulerCells>
            <RulerBand $x={133} $w={16} /><RulerBand $x={247} $w={18} /><RulerBand $x={549} $w={18} /><RulerBand $x={841} $w={16} />
            <Indent $x={561} $y={0}><Icon w={12} h={26} sw={1.300}><path d="M1 1h10v3L6 9 1 4zM6 9l5 5v3H1v-3zM1 18.500h10V25H1z" fill="#fff" /></Icon></Indent>
            <Indent $x={835} $y={10}><Icon w={12} h={9} sw={1.300}><path d="M6 1l5 4v3H1V5z" fill="#fff" /></Icon></Indent>
          </Ruler>
        </Centered>
        <ScrollTop><svg width="12" height="15" viewBox="0 0 12 15" aria-hidden="true"><rect width="12" height="15" rx="2" fill="#b0b9cf" /><path d="M3 2h6v3L6 7 3 5zM2 9h1.500v2H5V9h2v2h1.500V9H10v4H2z" fill="#fff" /></svg></ScrollTop>
        <VRuler>
          {vLabels.map((l, i) => <VCell key={i}>{l}</VCell>)}
          {[235, 295, 355, 415, 475, 544].map(y => <VBand key={y} $y={y} />)}
        </VRuler>
        <Centered $clip>
          <Page>
            <TableWrap>
              <Sheet>
                <colgroup><col width="116" /><col width="302" /><col /></colgroup>
                <tbody>
                  <Row $h={90}><Title colSpan={3}>准考证</Title></Row>
                  {fields.map(([label, field], i) => (
                    <Row key={label} $h={i ? 60 : 59}>
                      <LabelCell scope="row" $low={i === 0}><Song>{label}</Song></LabelCell>
                      <FieldCell><Brace>{'{'}</Brace>{'  MERGEFIELD "'}<Song>{field}</Song>{'"  '}<Brace>{'}'}</Brace></FieldCell>
                      {i === 0 && (
                        <PictureCell rowSpan={5}>
                          <CodeLine><Brace>{'{'}</Brace> INCLUDEPICTURE</CodeLine>
                          <CodeLine>{'"C:\\\\Users\\\\nanxuan\\\\Pictures\\\\Saved'}</CodeLine>
                          <CodeLine>{'Pictures\\\\25487421477.jpg" \\*'}</CodeLine>
                          <CodeLine $end>{'MERGEFORMAT  '}<Brace>{'}'}</Brace><TextCursor /></CodeLine>
                        </PictureCell>
                      )}
                    </Row>
                  ))}
                </tbody>
              </Sheet>
              <Mark $x={9} $y={-29} $w={1} $h={29} /><Mark $x={702} $y={-29} $w={1} $h={29} />
              <Mark $x={-19} $y={0} $w={19} $h={1} /><Mark $x={712} $y={0} $w={19} $h={1} />
              <Handle aria-label="移动表格" $x="-26px" $y="-26px" $w={26} $h={26}><Icon w={20} color="#74767b"><path d="M10 1v18M1 10h18M7.500 4L10 1.500 12.500 4M7.500 16l2.500 2.500 2.500-2.500M4 7.500L1.500 10 4 12.500M16 7.500l2.500 2.500-2.500 2.500" /></Icon></Handle>
              <Handle aria-label="添加列" $side="right" $x="713px" $y="171px" $w={23} $h={46}><PlusSign /></Handle>
              <Handle aria-label="添加行" $side="bottom" $x="332px" $y="391px" $w={46} $h={23}><PlusSign /></Handle>
              <Handle aria-label="调整表格大小" $x="711px" $y="389px" $w={26} $h={26}><Icon w={18} color="#74767b"><path d="M1.500 7V1.500H7M1.500 1.500L7 7M16.500 11v5.500H11M16.500 16.500L11 11" /></Icon></Handle>
              <PasteTag aria-label="粘贴选项"><svg width="16" height="18" viewBox="0 0 16 18" aria-hidden="true"><path d="M0 0h10l6 6v12H0z" fill="#bccfec" /><path d="M10 0v6h6M2.500 5h5M2.500 8h5M2.500 14V11h11v3zM8 11v6" fill="none" stroke="#fff" strokeWidth="1.300" /></svg><Caret color="#a9abaf" /></PasteTag>
            </TableWrap>
          </Page>
        </Centered>
        <Scroll>
          <svg width="8" height="5" viewBox="0 0 8 5" fill="#8591b0" aria-hidden="true"><path d="M0 5h8L4 0z" /></svg>
          <Track><Thumb /></Track>
          <svg width="8" height="4" viewBox="0 0 8 4" fill="#8591b0" aria-hidden="true"><path d="M0 0h8L4 4z" /></svg>
          <svg width="8" height="9" viewBox="0 0 8 9" fill="#8591b0" aria-hidden="true"><path d="M0 4h8L4 0zM0 9h8L4 5z" /></svg>
          <Icon w={8} color="#a5aec4"><rect x="1" y="1" width="6" height="6" rx="1" /></Icon>
          <svg width="8" height="9" viewBox="0 0 8 9" fill="#8591b0" aria-hidden="true"><path d="M0 0h8L4 4zM0 5h8L4 9z" /></svg>
        </Scroll>
        <Rail>
          <Grip />
          {rail.map(([n, art]) => <IconBtn key={n} aria-label={n}>{art}</IconBtn>)}
          <RailEnd><IconBtn aria-label="更多工具"><Icon w={20} h={6}><circle cx="3" cy="3" r="1.900" /><circle cx="10" cy="3" r="1.900" /><circle cx="17" cy="3" r="1.900" /></Icon></IconBtn></RailEnd>
        </Rail>
      </Work>

      <Status>
        <Info>页面: 1/1</Info>
        <Rule $h={18} />
        <Count>字数: 62</Count>
        <Chip $on><Icon w={20} h={18}><path d="M1 1h6l3 1.500L13 1h6v15h-6l-3 1.500L7 16H1zM6 8.500l3 3L14.500 5.500" /></Icon>拼写检查</Chip>
        <IconBtn $w={14} aria-label="拼写检查选项"><Caret /></IconBtn>
        <Rule $h={18} $r={6} />
        <Chip><Icon w={20} h={18}><path d="M1 1h6l3 1.500L13 1h6v15h-6l-3 1.500L7 16H1zM7 5.500l6 6M13 5.500l-6 6" /></Icon>文档校对</Chip>
        <Rule $h={18} $l={6} />
        <ViewBar>
          <IconBtn aria-label="护眼模式"><Icon w={20} h={20}><path d="M1 13c4-7 14-7 18 0-4 7-14 7-18 0zM10 1v3M3 3l2 2.500M17 3l-2 2.500" /><circle cx="10" cy="13" r="3.300" /></Icon></IconBtn>
          <Rule $h={18} $l={13} $r={11} />
          <View $on aria-label="页面视图"><Icon w={20}><path d="M2 1h12l4 3.500V19H2zM5.500 8h9M5.500 12.500h9" /></Icon></View>
          <View aria-label="大纲"><Icon w={20}><path d="M6 2h14M8 8h12M8 13h12M6 18.500h14M0 2h3M3 8h2M3 13h2M0 18.500h3" /></Icon></View>
          <View aria-label="阅读版式"><Icon w={20}><path d="M10 3.500v15L8.500 17H1V2h7.500zM10 3.500L11.500 2H19v15h-7.500L10 18.500" /></Icon></View>
          <View aria-label="Web 版式"><Icon w={20}><circle cx="10" cy="10" r="9" /><ellipse cx="10" cy="10" rx="4.500" ry="9" /><path d="M1.500 7h17M1.500 13h17" /></Icon></View>
          <View aria-label="写作模式"><Icon w={20}><path d="M3 12L14 1l4 3L8 16l-5.500 2zM3 12l5 4M6 14.500L16 3M8 19h11" /></Icon></View>
          <Rule $h={18} $l={7} $r={16} />
          <IconBtn aria-label="最佳显示比例"><Icon w={18}><path d="M1 5V1h4M13 1h4v4M17 13v4h-4M5 17H1v-4M5 5h8v8H5z" /></Icon></IconBtn>
          <Rule $h={0} $l={8} />
          <Zoom aria-label="显示比例" defaultValue="100%"><option>100%</option></Zoom>
          <Caret />
          <Rule $h={0} $l={12} />
          <IconBtn $w={14} aria-label="缩小"><Icon w={13} h={4} sw={3}><path d="M0 2h13" /></Icon></IconBtn>
          <Slider type="range" min={0} max={100} defaultValue={49} aria-label="缩放" />
          <IconBtn $w={14} aria-label="放大"><Icon w={14} sw={3}><path d="M7 0v14M0 7h14" /></Icon></IconBtn>
          <Rule $h={0} $l={13} />
          <IconBtn aria-label="全屏"><Icon w={18} sw={1.700}><path d="M1 6V1h5M1 1l5.500 5.500M12 1h5v5M17 1l-5.500 5.500M17 12v5h-5M17 17l-5.500-5.500M6 17H1v-5M1 17l5.500-5.500" /></Icon></IconBtn>
        </ViewBar>
      </Status>

      <Taskbar>
        <Weather>
          <svg width="30" height="30" viewBox="0 0 30 30" aria-hidden="true"><linearGradient id="moon" x2="0" y2="1"><stop stopColor="#f6c667" /><stop offset=".5" stopColor="#f5ac2c" /><stop offset="1" stopColor="#f07818" /></linearGradient><path d="M20 0c6 3 10 9 9.500 16C29 24 23 30 15 30 8 30 3 26 1 19c8 3 23-3 19-19z" fill="url(#moon)" /></svg>
          <div><div>18°C</div><WeatherSky>晴朗</WeatherSky></div>
        </Weather>
        <Apps>{apps.map(a => <AppBtn key={a.name} $on={a.on} $open={a.open} aria-label={a.name}>{a.art}</AppBtn>)}</Apps>
        <Tray>
          <Icon w={18} h={10} color="#1d1d1d"><path d="M1.500 9L9 1.500 16.500 9" /></Icon>
          <Rule $h={0} $l={10} />
          <svg width="22" height="15" viewBox="0 0 22 15" aria-hidden="true"><path d="M5 14C0 14 0 7.500 4 6.500 6-.5 15-.5 17 5.500c6 1 5.500 8.500.5 8.500z" fill="#8b8d91" /><path d="M4 14l8-7 9 5-3 2z" fill="#f4f4f5" /><path d="M5 14C0 14 0 7.500 4 6.500 6-.5 15-.5 17 5.500c6 1 5.500 8.500.5 8.500z" fill="none" stroke="#1d1d1d" strokeWidth="1.500" /></svg>
          <Lang>英</Lang>
          <Icon w={20} h={16} color="#1d1d1d" sw={1.600}><path d="M1 6.500c5-6.500 13-6.500 18 0M4 9c3.500-4.500 8.500-4.500 12 0M6.500 11.500c2-3 5-3 7 0" /><circle cx="10" cy="13.500" r="1.300" fill="#1d1d1d" /></Icon>
          <Rule $h={0} $l={9} />
          <Icon w={20} h={16} color="#1d1d1d"><path d="M1 5h3l4-4v14l-4-4H1zM10.500 5c1.500 2 1.500 4 0 6M13 3c2.500 3 2.500 7 0 10" /><path d="M16 1c4 4 4 10 0 14" stroke="#b6b7ba" /></Icon>
          <Rule $h={0} $l={9} />
          <Icon w={20} h={14} color="#1d1d1d" sw={1.600}><rect x="1" y="1" width="16" height="12" rx="2.500" /><path d="M3.500 3.500H9v7H3.500z" fill="#1d1d1d" stroke="none" /><path d="M19 5v4" strokeWidth="2" /></Icon>
          <Clock><div>19:49</div><div>2022/10/19</div></Clock>
        </Tray>
      </Taskbar>
      <Watermark>CSDN @Zhanxuan</Watermark>
    </Shell>
  );
}
